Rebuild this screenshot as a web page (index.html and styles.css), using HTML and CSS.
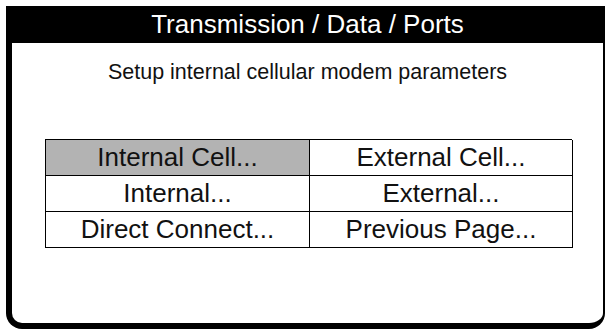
FILE: index.html
```html
<!DOCTYPE html>
<html lang="en">
<head>
  <meta charset="UTF-8" />
  <title>Transmission / Data / Ports</title>
  <link rel="stylesheet" href="styles.css">
</head>
<body>
  <div class="screen">
    <h1 class="title">Transmission / Data / Ports</h1>
    <p class="hint">Setup internal cellular modem parameters</p>

    <div class="menu">
      <div class="menu-item selected">Internal Cell...</div>
      <div class="menu-item">External Cell...</div>
      <div class="menu-item">Internal...</div>
      <div class="menu-item">External...</div>
      <div class="menu-item">Direct Connect...</div>
      <div class="menu-item">Previous Page...</div>
    </div>
  </div>
</body>
</html>
```

FILE: styles.css
```css
* {
  box-sizing: border-box;
}

body {
  margin: 0;
  background: #fff;
  font-family: "Liberation Sans", Arial, sans-serif;
  color: #111;
}

.screen {
  margin: 6px 0 0 6px;
  width: 599px;
  height: 323px;
  border-left: 6px solid #000;
  border-right: 2px solid #000;
  border-bottom: 6px solid #000;
  border-radius: 0 0 16px 16px;
  overflow: hidden;
}

.title {
  margin: 0;
  height: 37px;
  line-height: 37px;
  background: #000;
  color: #fff;
  text-align: center;
  font-weight: normal;
  font-size: 26px;
}

.hint {
  margin: 16px 0 0;
  text-align: center;
  font-size: 21.5px;
  line-height: 26px;
}

.menu {
  display: grid;
  grid-template-columns: 264px 263px;
  width: 527px;
  margin: 54px 0 0 33px;
  border-top: 1px solid #000;
  border-left: 1px solid #000;
}

.menu-item {
  height: 36px;
  line-height: 35px;
  text-align: center;
  font-size: 26px;
  border-right: 1px solid #000;
  border-bottom: 1px solid #000;
}

.menu-item.selected {
  background: #b3b3b3;
}
```
